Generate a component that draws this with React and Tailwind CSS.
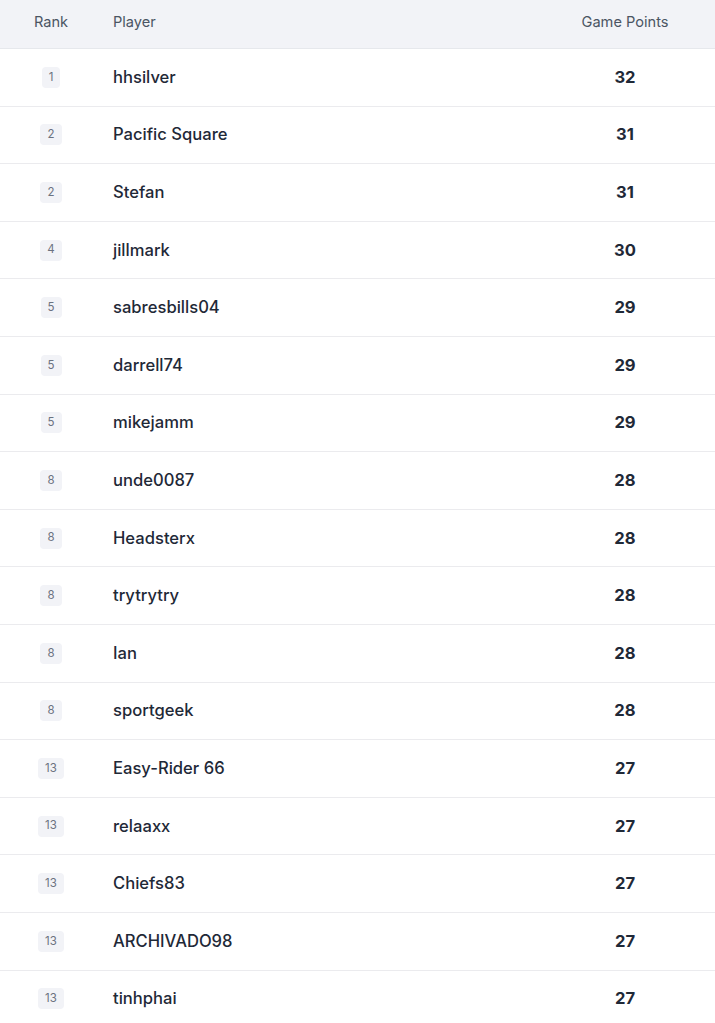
const players = [
  { rank: 1, name: 'hhsilver', points: 32 },
  { rank: 2, name: 'Pacific Square', points: 31 },
  { rank: 2, name: 'Stefan', points: 31 },
  { rank: 4, name: 'jillmark', points: 30 },
  { rank: 5, name: 'sabresbills04', points: 29 },
  { rank: 5, name: 'darrell74', points: 29 },
  { rank: 5, name: 'mikejamm', points: 29 },
  { rank: 8, name: 'unde0087', points: 28 },
  { rank: 8, name: 'Headsterx', points: 28 },
  { rank: 8, name: 'trytrytry', points: 28 },
  { rank: 8, name: 'Ian', points: 28 },
  { rank: 8, name: 'sportgeek', points: 28 },
  { rank: 13, name: 'Easy-Rider 66', points: 27 },
  { rank: 13, name: 'relaaxx', points: 27 },
  { rank: 13, name: 'Chiefs83', points: 27 },
  { rank: 13, name: 'ARCHIVADO98', points: 27 },
  { rank: 13, name: 'tinhphai', points: 27 },
];

const Leaderboard = () => {
  return (
    <div className="w-[715px] h-[1023px] overflow-hidden bg-white font-['Inter',sans-serif]">
      {/* Header */}
      <div className="grid grid-cols-[102px_1fr_180px] h-[49px] pt-3 bg-[#f2f3f7] border-b border-[#e6e8ec] text-[14.6px] text-[#4b5563]">
        <div className="text-center">Rank</div>
        <div className="pl-[11px]">Player</div>
        <div className="text-center">Game Points</div>
      </div>

      {/* Rows */}
      {players.map((p, index) => (
        <div
          key={index}
          className="grid grid-cols-[102px_1fr_180px] items-center h-[57.6px] border-b border-[#ebebee]"
        >
          <div className="flex justify-center">
            <span className="flex items-center h-[21px] px-[7px] rounded bg-[#f2f3f7] text-[11.5px] text-[#6b7280]">
              {p.rank}
            </span>
          </div>
          <div className="pl-[11px] text-[16.6px] font-medium text-[#1f2937]">{p.name}</div>
          <div className="text-center text-[16.6px] font-bold text-[#1f2937]">{p.points}</div>
        </div>
      ))}
    </div>
  );
};

export default function App() {
  return <Leaderboard />;
}
